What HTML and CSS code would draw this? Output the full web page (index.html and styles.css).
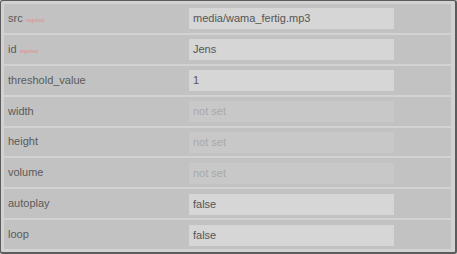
FILE: index.html
```html
<!DOCTYPE html>
<html>
<head>
<meta charset="utf-8">
<link rel="stylesheet" href="styles.css">
</head>
<body>
<div class="frame">
  <div class="props">
    <div class="row"><div class="name">src <span class="req">required</span></div><div class="field">media/wama_fertig.mp3</div></div>
    <div class="row"><div class="name">id <span class="req">required</span></div><div class="field">Jens</div></div>
    <div class="row"><div class="name">threshold_value</div><div class="field">1</div></div>
    <div class="row"><div class="name">width</div><div class="field unset">not set</div></div>
    <div class="row"><div class="name">height</div><div class="field unset">not set</div></div>
    <div class="row"><div class="name">volume</div><div class="field unset">not set</div></div>
    <div class="row"><div class="name">autoplay</div><div class="field">false</div></div>
    <div class="row"><div class="name">loop</div><div class="field">false</div></div>
  </div>
</div>
</body>
</html>
```
FILE: styles.css
```css
html, body {
  margin: 0;
  padding: 0;
  background: #c4c4c4;
}
body {
  font-family: "Liberation Sans", Arial, sans-serif;
  font-size: 11px;
  color: #5a5a5a;
}
.frame {
  width: 457px;
  height: 254px;
  box-sizing: border-box;
  border: 2px solid #5c5c5c;
  border-top-width: 1px;
  border-left-width: 1px;
  border-radius: 3px;
  background: #d2d2d2;
  padding: 3px 4px 3px 3px;
}
.props {
  display: flex;
  flex-direction: column;
  gap: 2px;
}
.row {
  display: flex;
  align-items: center;
  height: 28.875px;
  background: #c2c2c2;
}
.name {
  box-sizing: border-box;
  width: 185px;
  padding-left: 4px;
  margin-top: -1px;
}
.req {
  color: #e58a8a;
  font-size: 5px;
}
.field {
  width: 205px;
  height: 21px;
  margin-top: 1px;
  box-sizing: border-box;
  background: #d6d6d6;
  padding: 0 4px;
  line-height: 21px;
  color: #555;
}
.field.unset {
  background: #c8c8c8;
  color: #a9a9a9;
}
```
